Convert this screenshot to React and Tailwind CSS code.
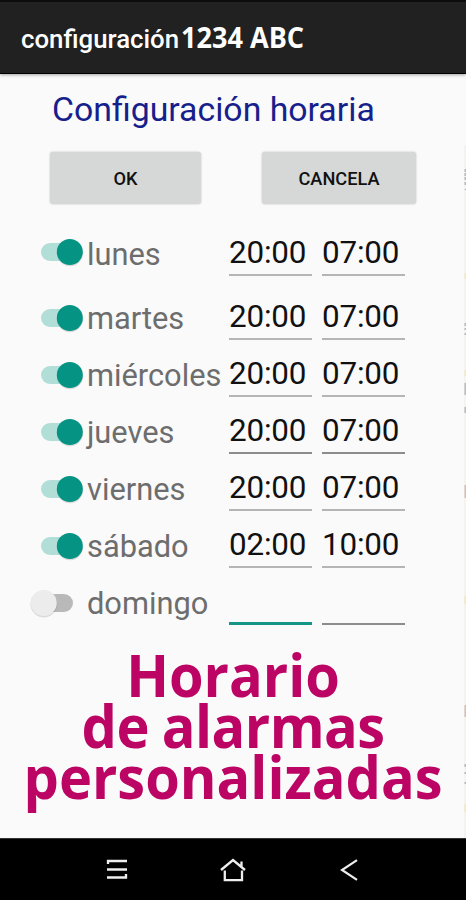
const days = [
  { name: 'lunes', enabled: true, from: '20:00', to: '07:00' },
  { name: 'martes', enabled: true, from: '20:00', to: '07:00' },
  { name: 'miércoles', enabled: true, from: '20:00', to: '07:00' },
  { name: 'jueves', enabled: true, from: '20:00', to: '07:00' },
  { name: 'viernes', enabled: true, from: '20:00', to: '07:00' },
  { name: 'sábado', enabled: true, from: '02:00', to: '10:00' },
  { name: 'domingo', enabled: false, from: '', to: '' },
]

function Toggle({ enabled }) {
  return (
    <svg width="58" height="34" viewBox="0 0 58 34" className="shrink-0">
      {enabled ? (
        <>
          <rect x="11" y="8" width="36" height="18" rx="9" fill="#b1dfd7" />
          <circle cx="40" cy="18" r="13.2" fill="#000" opacity="0.13" />
          <circle cx="39.8" cy="17" r="13" fill="#059483" />
        </>
      ) : (
        <>
          <rect x="11" y="8" width="32" height="18" rx="9" fill="#b9b9b9" />
          <circle cx="13.8" cy="18" r="13.4" fill="#000" opacity="0.12" />
          <circle cx="13.8" cy="17" r="13" fill="#ececec" />
        </>
      )}
    </svg>
  )
}

function TimeField({ value, focused, dark }) {
  return (
    <div
      className={`h-[57px] w-[83px] pt-[14px] text-[31.4px] leading-[40px] tracking-[-0.2px] text-[#111] ${
        focused
          ? 'border-b-3 border-[#159686]'
          : dark
            ? 'border-b-2 border-[#8c8c8c]'
            : 'border-b-2 border-[#b5b5b5]'
      }`}
    >
      {value}
    </div>
  )
}

function DayRow({ day, first }) {
  const dark = !day.enabled || day.name === 'jueves'

  return (
    <div className={`flex h-[57px] shrink-0 items-start pl-[30px] ${first ? 'mb-[7px]' : ''}`}>
      <div className={first ? 'pt-[16px]' : 'pt-[18px]'}>
        <Toggle enabled={day.enabled} />
      </div>
      <div className="-ml-px w-[142px] whitespace-nowrap pt-[16px] text-[30.8px] leading-[40px] text-[#6d6d6d]">
        {day.name}
      </div>
      <div className="flex gap-[10px]">
        <TimeField value={day.from} focused={!day.enabled} dark={dark} />
        <TimeField value={day.to} dark={dark} />
      </div>
    </div>
  )
}

// content of the neighbouring page that peeks in at the right edge
function PageEdge() {
  return (
    <svg width="3" height="764" viewBox="0 74 3 764" className="absolute right-0 top-[74px]">
      <rect x="1" y="145" width="2" height="693" fill="#f5f3ef" />
      <g stroke="#b8b8b8" strokeWidth="1.5">
        <path d="M2.2 169v11" strokeDasharray="3 1" />
        <path d="M2.2 182v3M2.2 189v1M2.2 323v3M2.2 328v2M2.2 333v2M2.2 383v12M2.2 407v6M2.2 764v3M2.2 772v2M2.2 782v2" />
      </g>
      <path d="M2.2 485v13M2.2 705v12" stroke="#d3bdb0" strokeWidth="1.5" />
      <path d="M2.2 273v6M2.2 370v6M2.2 596v8M2.2 804v8" stroke="#f3e7bb" strokeWidth="1.5" />
    </svg>
  )
}

function NavBar() {
  return (
    <nav className="flex h-[62px] shrink-0 items-center border-t border-[#333] bg-black pl-[106px]">
      <svg width="22" height="22" viewBox="0 0 22 22" fill="none" stroke="#eee" strokeWidth="2.3">
        <path d="M2 5V2H21M1 10.5H21M1 18.5H20V15" />
      </svg>
      <svg
        width="26"
        height="24"
        viewBox="0 0 26 24"
        fill="none"
        stroke="#eee"
        strokeWidth="2.3"
        className="ml-[92px]"
      >
        <path d="M1 12L13 2L25 12M21.5 9V3.5M4.8 12.5V22.2H22V12.5" />
      </svg>
      <svg
        width="18"
        height="22"
        viewBox="0 0 18 22"
        fill="none"
        stroke="#eee"
        strokeWidth="2.2"
        className="ml-[94px]"
      >
        <path d="M17 1.2L2 11L17 20.8" />
      </svg>
    </nav>
  )
}

function App() {
  return (
    <div className="relative flex h-[900px] w-[466px] flex-col overflow-hidden bg-[#fafafa] font-['Roboto',sans-serif]">
      <header className="flex h-[74px] shrink-0 items-baseline whitespace-nowrap border-b border-t-2 border-t-[#0c0c0c] border-b-black bg-[#212121] pl-[21px] pt-[16px] text-white shadow-[0_1px_3px_rgba(0,0,0,0.35)]">
        <span className="w-[160px] text-[25.8px] font-medium leading-[38px]">configuración</span>
        <span className="origin-left scale-x-[0.95] font-['Open_Sans',sans-serif] text-[28.5px] font-bold leading-[38px]">
          1234 ABC
        </span>
      </header>

      <main className="flex flex-1 flex-col">
        <h1 className="mt-[14px] whitespace-nowrap pl-[52px] text-[33.8px] leading-[44px] text-[#171f8c]">
          Configuración horaria
        </h1>
        <div className="mt-[20px] flex gap-[61px] pl-[50px] text-[18.2px] font-medium text-[#111]">
          <button className="h-[52px] w-[151px] rounded-[3px] bg-[#d6d8d7] pt-[2px] shadow-[0_0_2px_rgba(0,0,0,0.25)]">
            OK
          </button>
          <button className="h-[52px] w-[154px] rounded-[3px] bg-[#d6d8d7] pt-[2px] shadow-[0_0_2px_rgba(0,0,0,0.25)]">
            CANCELA
          </button>
        </div>
        <div className="mt-[15px] flex flex-col">
          {days.map((day, index) => (
            <DayRow key={day.name} day={day} first={index === 0} />
          ))}
        </div>
        <div className="mt-[24px] flex scale-x-[0.948] flex-col items-center whitespace-nowrap font-['Open_Sans',sans-serif] text-[59px] font-bold leading-[51px] text-[#bc0464]">
          <span>Horario</span>
          <span className="tracking-[-0.6px] [word-spacing:-1px]">de alarmas</span>
          <span>personalizadas</span>
        </div>
      </main>

      <NavBar />
      <PageEdge />
    </div>
  )
}

export default App
